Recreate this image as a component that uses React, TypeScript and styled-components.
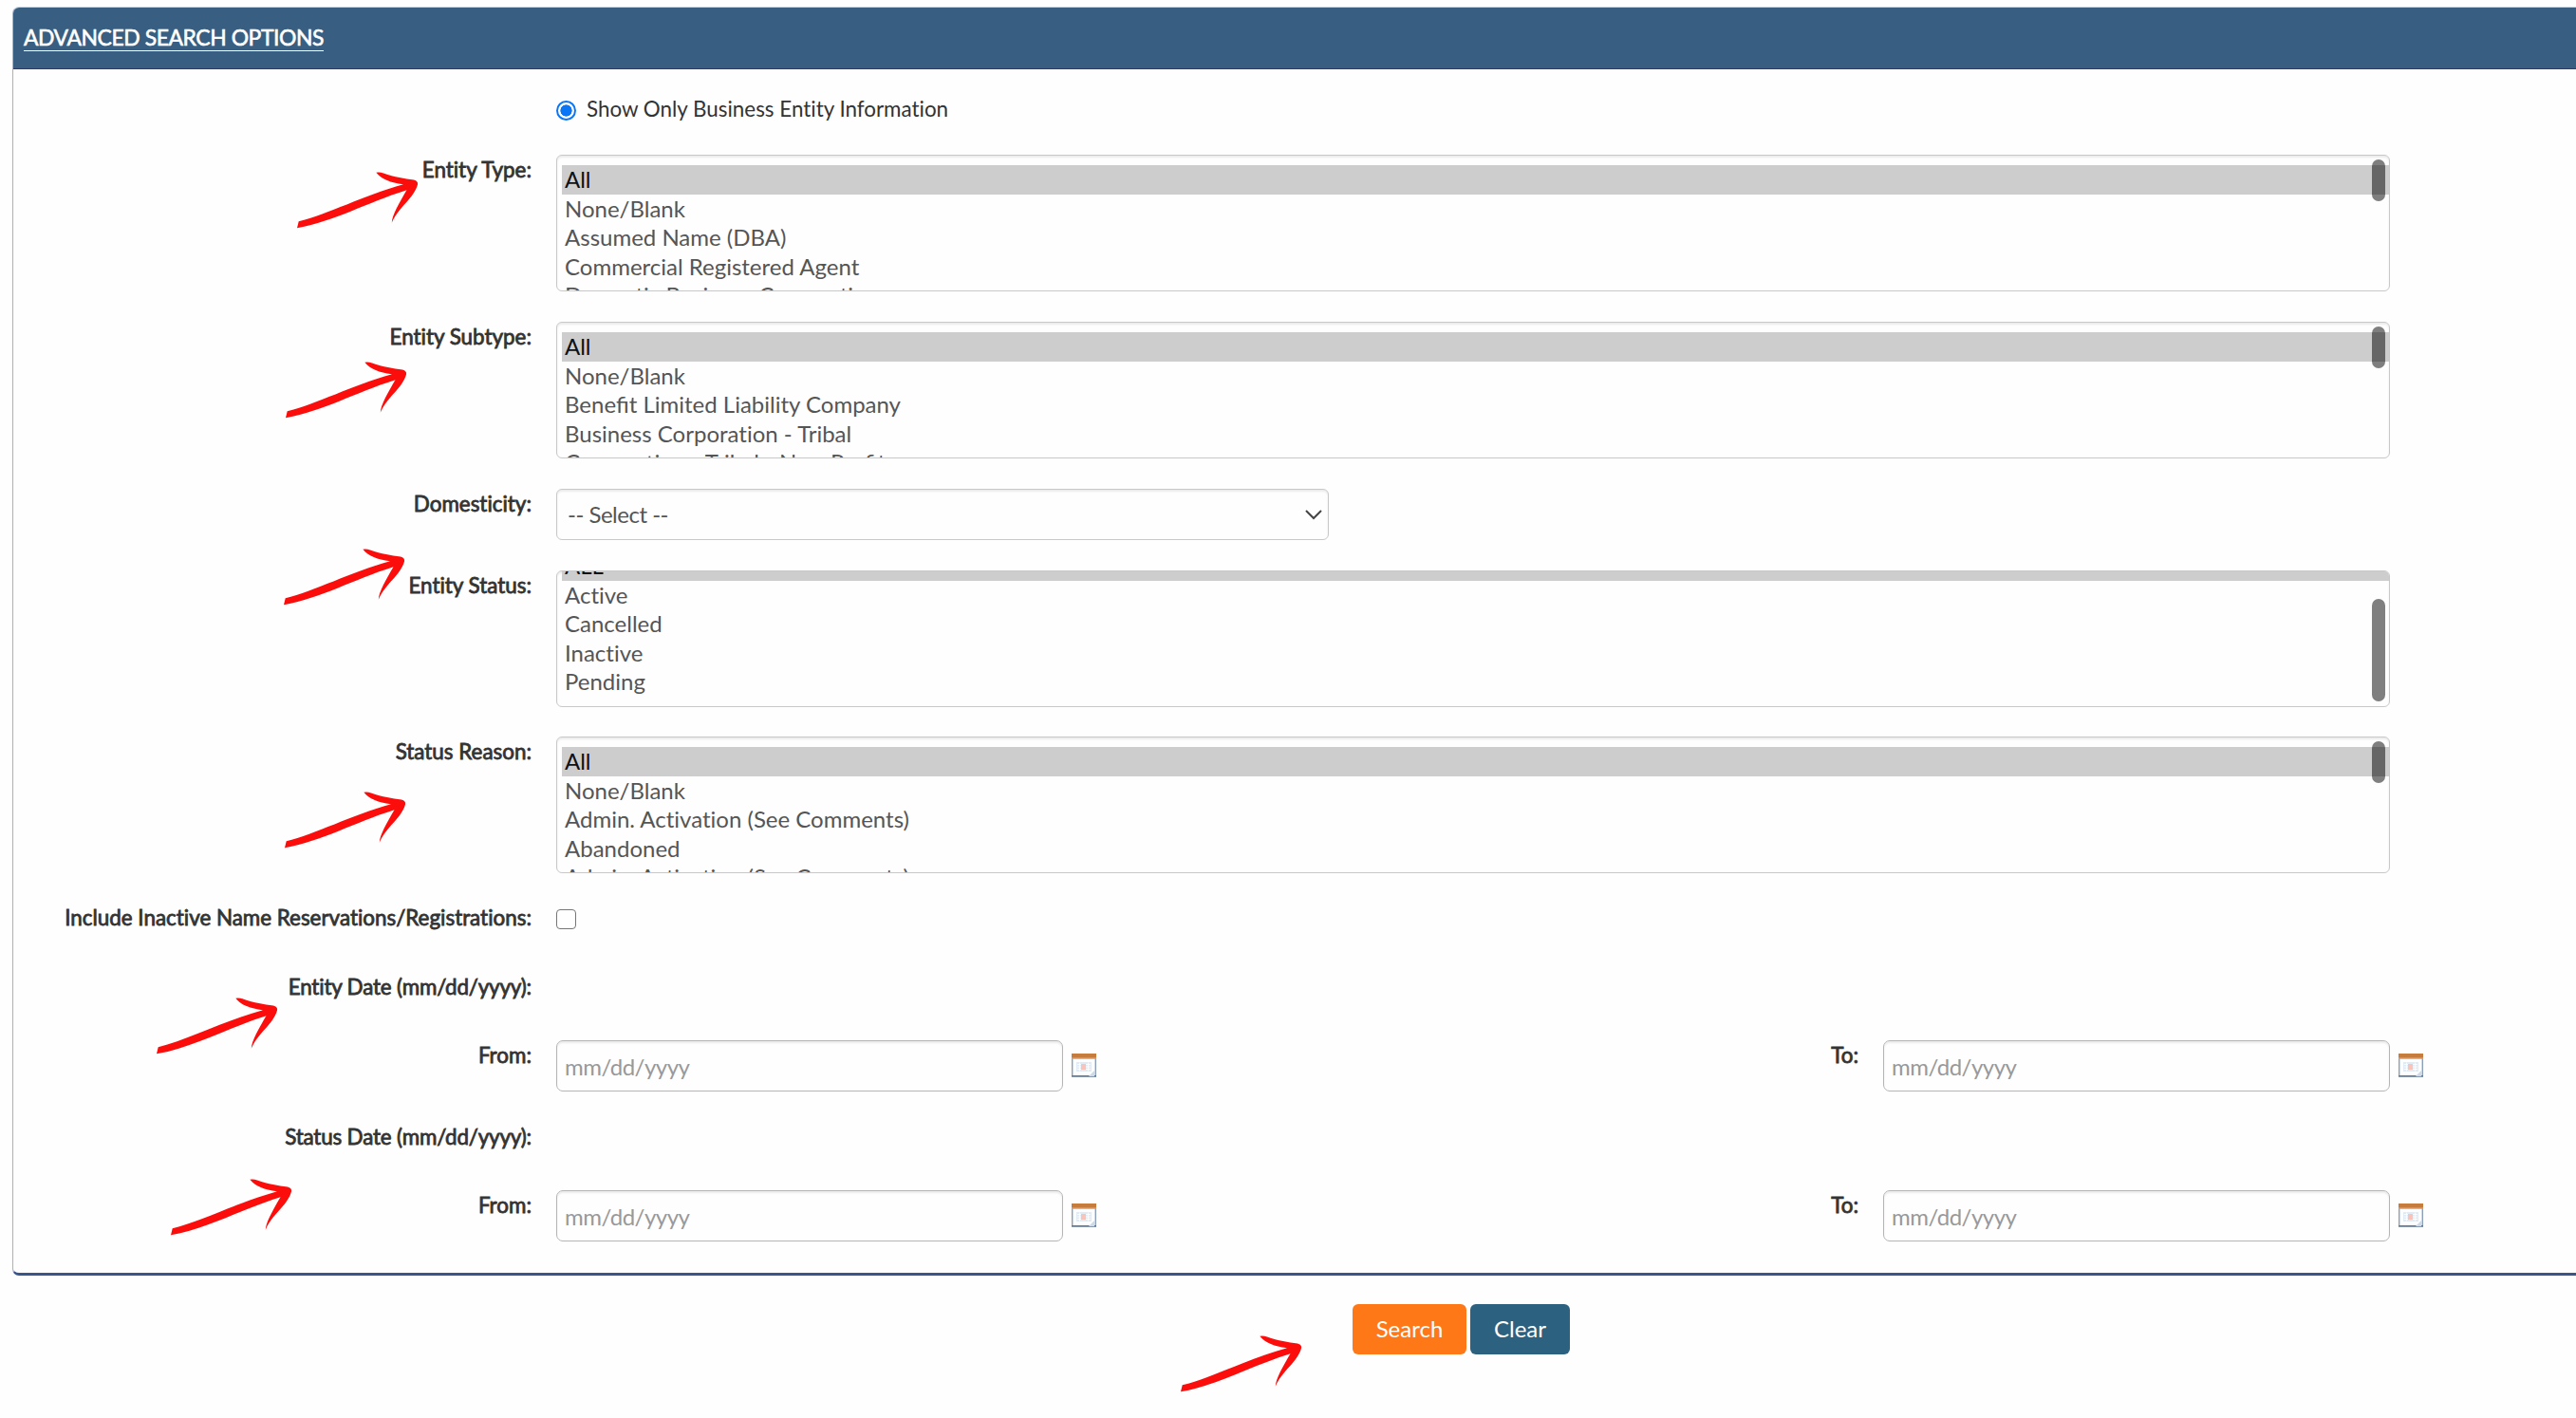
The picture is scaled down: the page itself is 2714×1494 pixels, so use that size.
import styled, { createGlobalStyle } from "styled-components";

const GlobalStyle = createGlobalStyle`
    * {
        box-sizing: border-box;
    }

    body {
        margin: 0;
        background: #fefefe;
        color: #333;
        font-family: Lato, "Open Sans", sans-serif;
        font-variant-ligatures: none;
        overflow: hidden;
    }
`

const Page = styled.div`
    position: relative;
    width: 2714px;
    height: 1494px;
    padding: 7px 0 0 13px;
    overflow: hidden;
`

const Panel = styled.section`
    height: 1337px;
    border: 1px solid #a9aed0;
    border-top-color: #c3d3e0;
    border-right: 0;
    border-bottom: 3px solid #39568a;
    border-radius: 7px 0 0 7px;
`

const PanelHeader = styled.header`
    height: 65px;
    padding: 18px 0 0 11px;
    background: #385f82;
    border-bottom: 1px solid #2f3a63;
    border-radius: 6px 0 0 0;
`

const PanelTitle = styled.a`
    display: inline-block;
    color: #fff;
    font-size: 22.9px;
    letter-spacing: -0.42px;
    line-height: 27px;
    border-bottom: 1px solid #fff;
    -webkit-text-stroke: 0.6px #fff;
`

const FormRow = styled.div<{ $height: number }>`
    display: grid;
    grid-template-columns: 546px 1fr;
    column-gap: 26px;
    height: ${({ $height }) => $height}px;
`

const DateRow = styled(FormRow)`
    grid-template-columns: 546px 570px 776px 1fr;
    column-gap: 26px;
`

const Label = styled.label`
    padding-top: 1px;
    text-align: right;
    white-space: nowrap;
    font-size: 22.4px;
    line-height: 30px;
    -webkit-text-stroke: 0.8px #333;
`

const DateLabel = styled(Label)`
    padding-top: 2px;
    letter-spacing: -0.17px;
`

const RadioRow = styled.label`
    display: flex;
    align-items: center;
    gap: 11px;
    height: 90px;
    padding: 0 0 7px 572px;
    font-size: 22.4px;
`

const Radio = styled.input`
    appearance: none;
    width: 21px;
    height: 21px;
    margin: 4px 0 0;
    border: 2px solid #0a75f5;
    border-radius: 50%;
    background: radial-gradient(circle, #0a75f5 5.8px, #fff 6.4px);
`

const ListBox = styled.div`
    position: relative;
    width: 1932px;
    height: 144px;
    border: 1px solid #c8c8c8;
    border-radius: 6px;
    background: #fefefe;
    box-shadow: inset 0 2px 2px rgba(0, 0, 0, 0.075);
    overflow: hidden;
`

const Options = styled.ul<{ $scrolled?: boolean }>`
    margin: ${({ $scrolled }) => ($scrolled ? "-21px" : "10px")} 0 0 5px;
    padding: 0;
    list-style: none;
`

const Option = styled.li<{ $selected?: boolean, $ligatures?: boolean }>`
    height: 30.6px;
    padding-left: 3px;
    line-height: 30.2px;
    font-size: 24px;
    font-variant-ligatures: ${({ $ligatures }) => ($ligatures ? "normal" : "none")};
    white-space: nowrap;
    color: ${({ $selected }) => ($selected ? "#111" : "#555")};
    background: ${({ $selected }) => ($selected ? "#cdcdcd" : "transparent")};
`

const Thumb = styled.div<{ $top: number, $height: number }>`
    position: absolute;
    top: ${({ $top }) => $top}px;
    right: 4px;
    width: 14px;
    height: ${({ $height }) => $height}px;
    border-radius: 7px;
    background: rgba(0, 0, 0, 0.5);
`

const SelectWrapper = styled.div`
    position: relative;
    width: 814px;
    height: 54px;

    svg {
        position: absolute;
        top: 22px;
        right: 7px;
    }
`

const Select = styled.select`
    appearance: none;
    width: 100%;
    height: 100%;
    padding: 0 11px 2px;
    border: 1px solid #c8c8c8;
    border-radius: 6px;
    background: #fefefe;
    box-shadow: inset 0 2px 2px rgba(0, 0, 0, 0.075);
    color: #555;
    font: 24px Lato, sans-serif;
    letter-spacing: -0.5px;
`

const Checkbox = styled.input`
    appearance: none;
    width: 21px;
    height: 21px;
    margin: 7px 0 0;
    border: 1.5px solid #767676;
    border-radius: 4px;
    background: #fff;
`

const DateField = styled.div`
    display: flex;
    gap: 9px;

    svg {
        margin-top: 14px;
    }
`

const DateInput = styled.input`
    width: 534px;
    height: 54px;
    padding: 1px 8px 0;
    border: 1px solid #b5b5b5;
    border-radius: 7px;
    background: #fefefe;
    box-shadow: inset 0 2px 2px rgba(0, 0, 0, 0.075);
    font: 24px Lato, sans-serif;
    letter-spacing: -0.5px;

    &::placeholder {
        color: #999;
        opacity: 1;
    }
`

const Actions = styled.div`
    display: flex;
    gap: 4px;
    padding: 30px 0 0 1412px;
`

const Button = styled.button<{ $color: string, $width: number }>`
    width: ${({ $width }) => $width}px;
    height: 53px;
    padding: 0 0 2px;
    border: 0;
    border-radius: 6px;
    background: ${({ $color }) => $color};
    color: #fff;
    font: 24px Lato, sans-serif;
`

const ArrowMark = styled.svg<{ $x: number, $y: number }>`
    position: absolute;
    left: ${({ $x }) => $x}px;
    top: ${({ $y }) => $y}px;
`

const Arrow = ({ x, y }: { x: number, y: number }) => {
    return <ArrowMark $x={x} $y={y} width="128" height="60" viewBox="0 0 128 60" fill="#fb0d0b">
        <path d="M0 59.3 L1.7 52.2 C32 45 70 25 112 13.3 C98 11 90 8.5 83.3 .7 Q87 0 91 1.4 C103 5.5 113 7 123 8.4 Q127.8 9.8 127 13.4 C123 28 106 38 99.8 53.7 C100 46 108 32 115.5 19.3 C72 33 40 52 0 59.3Z" />
    </ArrowMark>
}

const CalendarIcon = () => {
    return <svg width="26" height="25" viewBox="0 0 26 25">
        <rect x="0.7" y="0.7" width="24.6" height="23.3" fill="#fbfdff" stroke="#8ba0b8" strokeWidth="1.4" />
        <rect y="23" width="26" height="1.5" fill="#5f7893" />
        <rect width="26" height="5.5" fill="#c67c3c" />
        <rect y="4.5" width="26" height="1" fill="#e9a878" />
        <rect x="5" y="9" width="16" height="10" fill="#e0ebf5" />
        <path d="M6 11.5h14M6 14h14M6 16.5h14M8.5 9.5v9M17.5 9.5v9" stroke="#fff" strokeWidth="0.8" />
        <rect x="10" y="11" width="5" height="6" fill="#f9c3ba" />
        <path d="M18 24l6-6v6z" fill="#cfdae6" />
    </svg>
}

interface ListFieldProps {
    label: string;
    options: string[];
    height: number;
    scrolled?: boolean;
}

const ListField = ({ label, options, height, scrolled }: ListFieldProps) => {
    return <FormRow $height={height}>
        <Label>{label}</Label>
        <ListBox>
            <Options $scrolled={scrolled}>
                {options.map((option, i) => <Option key={i} $selected={i === 0} $ligatures={option.includes("fi")}>
                    {option}
                </Option>)}
            </Options>
            <Thumb $top={scrolled ? 29 : 4} $height={scrolled ? 108 : 44} />
        </ListBox>
    </FormRow>
}

const DateRange = ({ height }: { height: number }) => {
    return <DateRow $height={height}>
        <Label>From:</Label>
        <DateField>
            <DateInput placeholder="mm/dd/yyyy" />
            <CalendarIcon />
        </DateField>
        <Label>To:</Label>
        <DateField>
            <DateInput placeholder="mm/dd/yyyy" />
            <CalendarIcon />
        </DateField>
    </DateRow>
}

const entityTypes = ["All", "None/Blank", "Assumed Name (DBA)", "Commercial Registered Agent", "Domestic Business Corporation"];
const entitySubtypes = ["All", "None/Blank", "Benefit Limited Liability Company", "Business Corporation - Tribal", "Corporation - Tribal - Non-Profit"];
const entityStatuses = ["ALL", "Active", "Cancelled", "Inactive", "Pending"];
const statusReasons = ["All", "None/Blank", "Admin. Activation (See Comments)", "Abandoned", "Admin. Activation (See Comments)"];

const arrows = [[313, 180.5], [301, 380.5], [298.5, 577.5], [299.5, 833.5], [164.5, 1051], [179.5, 1242], [1244, 1407]];

const App = () => {
    return <Page>
        <GlobalStyle />
        <Panel>
            <PanelHeader>
                <PanelTitle>ADVANCED SEARCH OPTIONS</PanelTitle>
            </PanelHeader>
            <RadioRow>
                <Radio type="radio" defaultChecked />
                Show Only Business Entity Information
            </RadioRow>
            <ListField label="Entity Type:" options={entityTypes} height={176} />
            <ListField label="Entity Subtype:" options={entitySubtypes} height={176} />
            <FormRow $height={86}>
                <Label>Domesticity:</Label>
                <SelectWrapper>
                    <Select>
                        <option>-- Select --</option>
                    </Select>
                    <svg width="18" height="12" viewBox="0 0 18 12" fill="none" stroke="#444" strokeWidth="2">
                        <path d="M1 1l8 8 8-8" />
                    </svg>
                </SelectWrapper>
            </FormRow>
            <ListField label="Entity Status:" options={entityStatuses} height={175} scrolled />
            <ListField label="Status Reason:" options={statusReasons} height={175} />
            <FormRow $height={72}>
                <Label>Include Inactive Name Reservations/Registrations:</Label>
                <Checkbox type="checkbox" />
            </FormRow>
            <FormRow $height={73}>
                <DateLabel>Entity Date (mm/dd/yyyy):</DateLabel>
            </FormRow>
            <DateRange height={85} />
            <FormRow $height={73}>
                <DateLabel>Status Date (mm/dd/yyyy):</DateLabel>
            </FormRow>
            <DateRange height={60} />
        </Panel>
        <Actions>
            <Button $color="#ff7818" $width={120}>Search</Button>
            <Button $color="#2d6180" $width={105}>Clear</Button>
        </Actions>
        {arrows.map(([x, y]) => <Arrow key={y} x={x} y={y} />)}
    </Page>
}

export default App;
